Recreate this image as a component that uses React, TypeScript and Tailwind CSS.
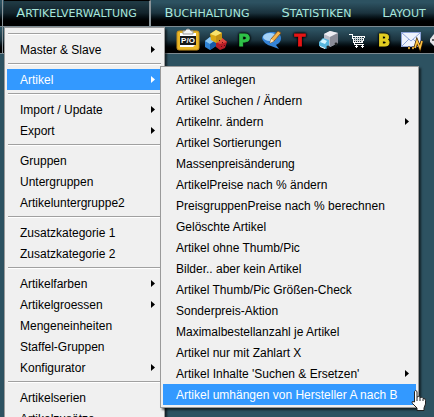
import React from "react";

type Entry = { label: string; more?: boolean; active?: boolean } | null;

const mainMenu: Entry[] = [
  null,
  { label: "Master & Slave", more: true },
  null,
  { label: "Artikel", more: true, active: true },
  null,
  { label: "Import / Update", more: true },
  { label: "Export", more: true },
  null,
  { label: "Gruppen" },
  { label: "Untergruppen" },
  { label: "Artikeluntergruppe2" },
  null,
  { label: "Zusatzkategorie 1" },
  { label: "Zusatzkategorie 2" },
  null,
  { label: "Artikelfarben", more: true },
  { label: "Artikelgroessen", more: true },
  { label: "Mengeneinheiten" },
  { label: "Staffel-Gruppen" },
  { label: "Konfigurator", more: true },
  null,
  { label: "Artikelserien" },
  { label: "Artikelzusätze" },
];

const subMenu: Entry[] = [
  { label: "Artikel anlegen" },
  { label: "Artikel Suchen / Ändern" },
  { label: "Artikelnr. ändern", more: true },
  { label: "Artikel Sortierungen" },
  { label: "Massenpreisänderung" },
  { label: "ArtikelPreise nach % ändern" },
  { label: "PreisgruppenPreise nach % berechnen" },
  { label: "Gelöschte Artikel" },
  { label: "Artikel ohne Thumb/Pic" },
  { label: "Bilder.. aber kein Artikel" },
  { label: "Artikel Thumb/Pic Größen-Check" },
  { label: "Sonderpreis-Aktion" },
  { label: "Maximalbestellanzahl je Artikel" },
  { label: "Artikel nur mit Zahlart X" },
  { label: "Artikel Inhalte 'Suchen & Ersetzen'", more: true },
  { label: "Artikel umhängen von Hersteller A nach B", active: true },
];

function Arrow() {
  return (
    <svg className="h-[7px] w-1 shrink-0" viewBox="0 0 4 7" fill="currentColor" aria-hidden="true">
      <path d="M0 0L4 3.5L0 7Z" />
    </svg>
  );
}

function MenuPanel({ entries, label, className }: { entries: Entry[]; label: string; className: string }) {
  return (
    <div
      role="menu"
      aria-label={label}
      className={`absolute border border-[#9a9a9a] bg-[#f0f0f0] p-0.5 text-xs text-black shadow-[2px_2px_2px_rgba(0,0,0,0.6)] ${className}`}
    >
      {entries.map((entry, i) =>
        entry ? (
          <button
            key={i}
            role="menuitem"
            className={`flex h-[21px] w-full items-center justify-between pr-[7px] pl-[13px] text-left whitespace-nowrap ${
              entry.active ? "bg-[#3399ff] text-white" : ""
            }`}
          >
            {entry.label}
            {entry.more && <Arrow />}
          </button>
        ) : (
          <div key={i} role="separator" className="flex h-[9px] flex-col px-px pt-[3px]">
            <div className="h-px bg-[#a0a0a0]" />
            <div className="h-px bg-white" />
          </div>
        ),
      )}
    </div>
  );
}

function Letter({ char, color }: { char: string; color: string }) {
  return (
    <svg className="size-6" viewBox="0 0 24 24" aria-hidden="true">
      <text
        x="12"
        y="18"
        textAnchor="middle"
        fontFamily="DejaVu Sans, sans-serif"
        fontWeight="bold"
        fontSize="16"
        fill={color}
        stroke={color}
        strokeWidth="0.8"
        style={{ filter: "drop-shadow(0 0 1px #000) drop-shadow(0 0 1px #000)" }}
      >
        {char}
      </text>
    </svg>
  );
}

function OrderIcon() {
  return (
    <svg className="size-6" viewBox="0 0 24 24" aria-hidden="true">
      <rect x="1" y="3" width="22" height="19" rx="2" fill="#eab726" stroke="#c48d1a" />
      <path d="M4 5H20V16L17 19H4Z" fill="#fff" />
      <path d="M7 6V3H9Q12 -1 15 3H17V6Z" fill="#f4f4f4" stroke="#999" />
      <rect x="4" y="8" width="16" height="9" fill="#181818" />
      <text x="12" y="15" textAnchor="middle" fontFamily="Liberation Sans, sans-serif" fontWeight="bold" fontSize="8" fill="#fff">
        P/O
      </text>
    </svg>
  );
}

function CubesIcon() {
  return (
    <svg className="size-6" viewBox="0 0 24 24" aria-hidden="true">
      <path d="M1 13L6 9L12 12V18L6 22L1 19Z" fill="#2f83d4" />
      <path d="M1 13L6 9L12 12L6 16Z" fill="#8cc8f4" />
      <path d="M6 16L12 12V18L6 22Z" fill="#1759a6" />
      <path d="M12 14L17 9L23 14L21 20L16 22L12 19Z" fill="#b51c26" />
      <path d="M12 14L17 9L23 14L16 16Z" fill="#e0483f" />
      <path d="M6 6L12 2L18 5V11L12 15L7 12Z" fill="#dba812" />
      <path d="M6 6L12 2L18 5L12 8Z" fill="#f9e36c" />
      <path d="M12 8L18 5V11L12 15Z" fill="#c39114" />
      <path d="M15 12H16V13H15ZM18 14H19V15H18ZM17 18H18V19H17ZM20 17H21V18H20Z" fill="#5c0d12" />
    </svg>
  );
}

function CommentIcon() {
  return (
    <svg className="size-6" viewBox="0 0 24 24" aria-hidden="true">
      <path d="M2 10C3 6 7 4 12 4C17 4 21 6 21 10C21 14 18 16 16 17L19 21L11 18C7 17 3 14 2 10Z" fill="#3583d6" />
      <ellipse cx="10" cy="9" rx="7" ry="4" fill="#a5d2f6" />
      <path d="M10 15L11 11L18 3L21 5L14 13Z" fill="#f6b44a" stroke="#7b4b18" strokeWidth="0.8" />
      <path d="M10 15L11 11L14 13Z" fill="#fbe9c8" />
    </svg>
  );
}

function TruckIcon() {
  return (
    <svg className="size-6" viewBox="0 0 24 24" aria-hidden="true">
      <path d="M8 6L14 3L22 5V15L14 19L8 14Z" fill="#b9bbc6" />
      <path d="M8 6L14 3L22 5L14 9Z" fill="#ededf3" />
      <path d="M14 9L22 5V15L14 19Z" fill="#8a8c98" />
      <path d="M3 14L7 10L13 12V18L10 21L3 18Z" fill="#59b7dd" />
      <path d="M4 14L7 11L11 13L9 16Z" fill="#d6f5ff" />
      <path d="M4 18L9 20V21L4 19Z" fill="#fff" />
      <circle cx="12" cy="19" r="1.6" fill="#222" />
      <circle cx="20" cy="16" r="1.4" fill="#222" />
    </svg>
  );
}

function CartIcon() {
  return (
    <svg className="size-6" viewBox="0 0 24 24" fill="none" stroke="#fff" shapeRendering="crispEdges" aria-hidden="true">
      <path d="M5 6.500H8.500V8.500L10.500 16.500H19.500M9 8.500H20.500L18.500 14.500H10.500" />
      <path d="M10 10.500H20M10 12.500H19M11.500 8V14M13.500 8V14M15.500 8V14M17.500 8V14" strokeOpacity="0.8" />
      <path d="M11 18H12V17H13V18H14V19H13V20H12V19H11ZM17 18H18V17H19V18H20V19H19V20H18V19H17Z" fill="#fff" stroke="none" />
    </svg>
  );
}

function MailIcon() {
  return (
    <svg className="size-6" viewBox="0 0 24 24" aria-hidden="true">
      <rect x="1.500" y="4.500" width="19" height="14" fill="#eef3fd" stroke="#8ea4d8" />
      <path d="M2 5L11 13L20 5M2 18L9 11M20 18L13 11" fill="none" stroke="#8ea4d8" />
      <path d="M8 20H10M12 20H14M15 20L17 13L20 20L22 13" fill="none" stroke="#3b2205" strokeWidth="3" />
      <path d="M8 20H10M12 20H14M15 20L17 13L20 20L22 13" fill="none" stroke="#ffc342" strokeWidth="1.6" />
    </svg>
  );
}

function DiceIcon() {
  return (
    <svg className="size-6" viewBox="0 0 24 24" aria-hidden="true">
      <path d="M2 11L6 6L18 5L22 12L18 19L6 18L2 14Z" fill="#e4e4e8" />
      <circle cx="5" cy="12" r="1" fill="#333" />
    </svg>
  );
}

function Cursor() {
  return (
    <svg className="absolute top-[389px] left-[411px] h-6 w-5" viewBox="0 0 20 24" aria-hidden="true">
      <path
        d="M3.500 13V2.500Q4.500 .5 6 2.500V8Q8 6.500 9 8.500Q11 7.500 12 9.500Q14.500 9 14.500 11.500V15L13 19V21.500H6V19L1.500 14.500Q0 11.500 3.500 13Z"
        fill="#fff"
        stroke="#222"
      />
      <path d="M6 8V12M9 9V12M12 10V12" stroke="#222" />
    </svg>
  );
}

const barTone = "bg-linear-to-b from-[#2d5261] from-10% via-[#1b333e] via-50% to-black to-90%";

const tabs = [
  { label: "Artikelverwaltung", className: "w-[147px] border-t border-r-2 border-t-black border-r-[#8a9499] bg-black/30" },
  { label: "Buchhaltung", className: "w-[112px]" },
  { label: "Statistiken", className: "w-[107px]" },
  { label: "Layout", className: "w-[68px]" },
];

export default function App() {
  return (
    <div className="relative h-screen overflow-hidden bg-[#2d5261] font-['Liberation_Sans',Arial,sans-serif]">
      <nav
        className={`flex h-[26px] overflow-hidden font-['DejaVu_Sans',sans-serif] text-[11px] leading-4 whitespace-nowrap text-[#a8e6dc] uppercase ${barTone}`}
      >
        <div className="mr-px w-[3px] shrink-0 border-r border-[#8a9499]" />
        {tabs.map((tab) => (
          <button key={tab.label} className={`flex shrink-0 items-center justify-center uppercase ${tab.className}`}>
            <span className="block first-letter:text-[13px]">{tab.label}</span>
          </button>
        ))}
      </nav>
      <div className={`flex h-[28px] overflow-hidden border-y border-[#7d8a91] ${barTone}`}>
        <div className="mr-[173px] w-[3px] shrink-0 border-r border-[#8a9499]" />
        <div className="flex shrink-0 items-center gap-1">
          <OrderIcon />
          <CubesIcon />
          <Letter char="P" color="#2fc148" />
          <CommentIcon />
          <Letter char="T" color="#e51515" />
          <TruckIcon />
          <CartIcon />
          <Letter char="B" color="#e2cd22" />
          <MailIcon />
          <DiceIcon />
        </div>
      </div>
      <MenuPanel entries={mainMenu} label="Artikelverwaltung" className="top-[27px] left-1 w-[161px]" />
      <MenuPanel entries={subMenu} label="Artikel" className="top-[66px] left-[160px] w-[259px]" />
      <Cursor />
    </div>
  );
}
